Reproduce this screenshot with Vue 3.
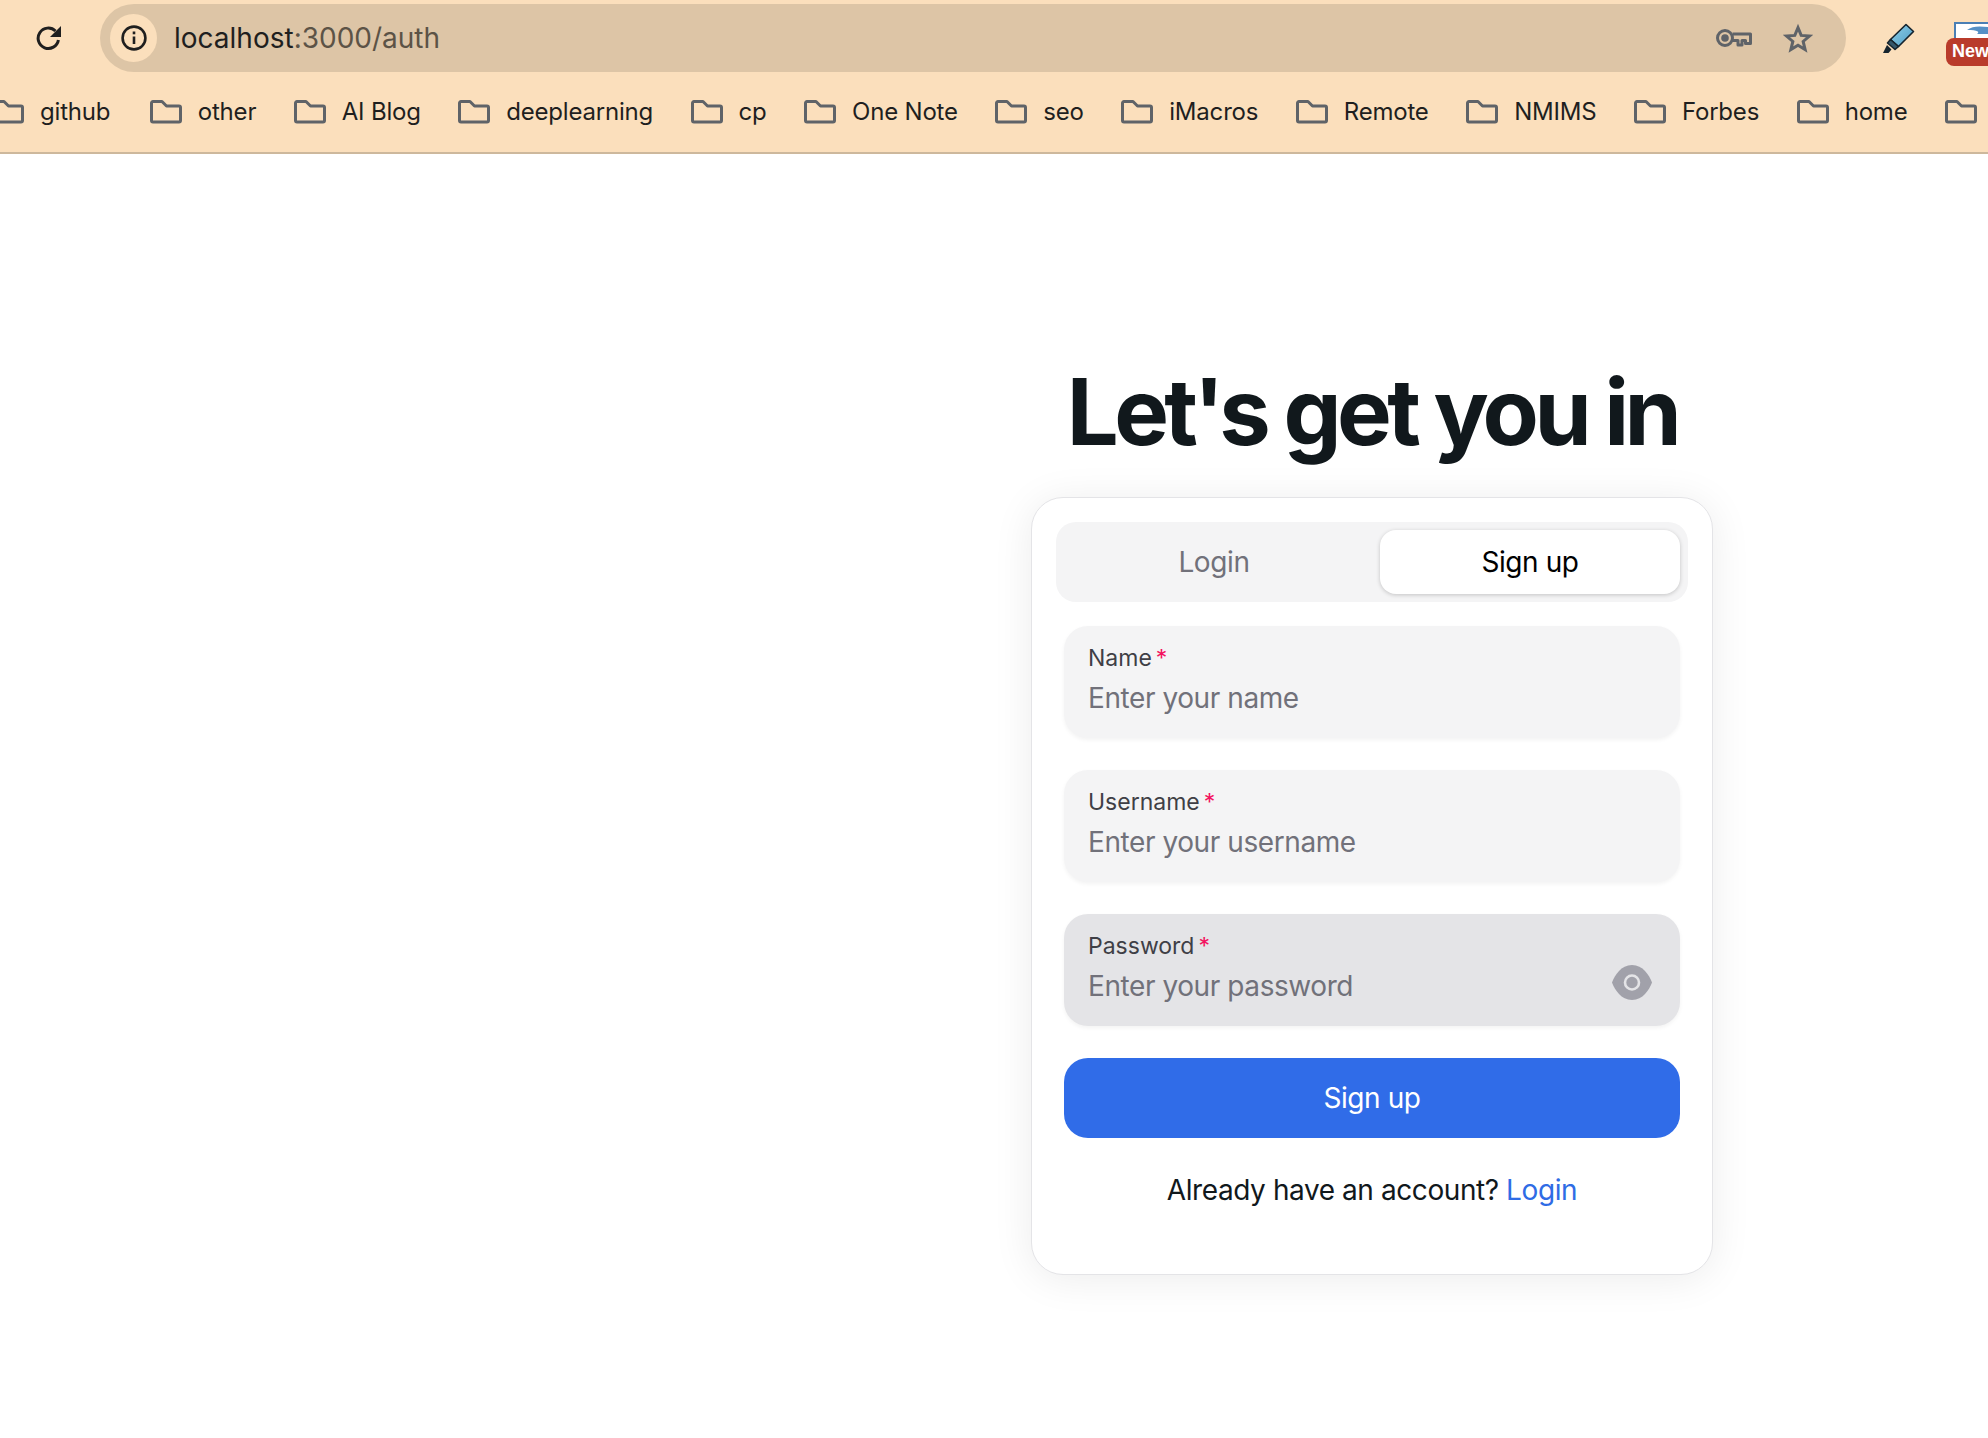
<script setup>
const bookmarks = ["github", "other", "AI Blog", "deeplearning", "cp", "One Note", "seo", "iMacros", "Remote", "NMIMS", "Forbes", "home", ""];
const fields = [
  { label: "Name", placeholder: "Enter your name" },
  { label: "Username", placeholder: "Enter your username" },
  { label: "Password", placeholder: "Enter your password", hover: true, eye: true },
];
</script>

<template>
  <div class="page">
    <header class="toolbar">
      <div class="nav-row">
        <svg class="reload" viewBox="0 0 26 26" fill="none" stroke="#1f1f1f" stroke-width="3">
          <path d="M19.5 6A10.2 10.2 0 1 0 22.4 15" />
          <path d="M25 1v11H14z" fill="#1f1f1f" stroke="none" />
        </svg>
        <div class="address">
          <div class="info-chip">
            <svg width="26" height="26" viewBox="0 0 26 26" fill="none" stroke="#1f1f1f" stroke-width="2.6">
              <circle cx="13" cy="13" r="11.4" />
              <path d="M13 11.5v7.5" />
              <path d="M13 6.5v2.8" />
            </svg>
          </div>
          <span class="url">localhost<span class="url-rest">:3000/auth</span></span>
          <svg class="key" width="36" height="18" viewBox="0 0 36 18" fill="none" stroke="#5f6368" stroke-width="3">
            <circle cx="9" cy="9" r="7.5" />
            <circle cx="9" cy="9" r="3.8" fill="#5f6368" stroke="none" />
            <path d="M16.5 5H34.5V14.5H29.5V11.5H26V16H22V11.5H16.5" stroke-linejoin="round" />
          </svg>
          <svg class="star" width="30" height="30" viewBox="0 0 32 32" fill="none" stroke="#5f6368" stroke-width="3.2" stroke-linejoin="miter">
            <path d="M16 5l3.4 8.2 8.9.7-6.8 5.8 2.1 8.7L16 23.8l-7.6 4.6 2.1-8.7-6.8-5.8 8.9-.7z" />
          </svg>
        </div>
        <svg class="marker" width="33" height="31" viewBox="0 0 33 31">
          <defs>
            <linearGradient id="marker-body" x1="0" y1="0" x2="1" y2="1">
              <stop offset="0" stop-color="#8fd0ea" />
              <stop offset="1" stop-color="#4f9cc4" />
            </linearGradient>
          </defs>
          <path d="M24 1.5l7.5 7-15 15-8-7z" fill="url(#marker-body)" stroke="#16242e" stroke-width="1.6" stroke-linejoin="round" />
          <path d="M8.5 16.5l8 7-3.5 3-7.5-6.5z" fill="#33566a" stroke="#16242e" stroke-width="1.6" stroke-linejoin="round" />
          <path d="M5 22l4.500 4.500-3 3.500H1z" fill="#16242e" />
        </svg>
        <div class="extension">
          <svg class="ext-logo" width="34" height="18" viewBox="0 0 34 18">
            <rect x="0" y="0" width="34" height="18" fill="#4a7fb5" />
            <rect x="2" y="2" width="32" height="16" fill="#fff" />
            <path d="M13 8c5-4 12-4 21-3v7H23c3-2 1-4-10-4z" fill="#5590c6" />
          </svg>
          <span class="new-badge">New</span>
        </div>
      </div>
      <div class="bookmarks">
        <div v-for="(item, i) in bookmarks" :key="i" class="bookmark">
          <svg width="32" height="24" viewBox="0 0 32 24" fill="none" stroke="#5f6368" stroke-width="3" stroke-linejoin="round">
            <path d="M1.500 3a1.500 1.500 0 0 1 1.500-1.500h9l4.500 4.500H29a1.500 1.500 0 0 1 1.500 1.500v13A1.500 1.500 0 0 1 29 22H3a1.500 1.500 0 0 1-1.500-1.500z" />
          </svg>
          <span v-if="item" class="bookmark-name">{{ item }}</span>
        </div>
      </div>
    </header>

    <main class="content">
      <h1 class="title">Let's get you in</h1>
      <section class="card">
        <div class="tabs">
          <button class="tab">Login</button>
          <button class="tab active">Sign up</button>
        </div>
        <form class="form" @submit.prevent>
          <div v-for="field in fields" :key="field.label" class="field" :class="{ hover: field.hover }">
            <div class="field-text">
              <label class="label">{{ field.label }}<span class="required">*</span></label>
              <span class="placeholder">{{ field.placeholder }}</span>
            </div>
            <svg v-if="field.eye" class="eye" width="40" height="35" viewBox="0 0 40 35">
              <path d="M20 0C31 0 37 10 40 17.500C37 25 31 35 20 35C9 35 3 25 0 17.500C3 10 9 0 20 0z" fill="#a1a1aa" />
              <circle cx="20" cy="17.500" r="7" fill="none" stroke="#e4e4e7" stroke-width="2.600" />
            </svg>
          </div>
          <button class="submit" type="submit">Sign up</button>
        </form>
        <p class="switch">Already have an account? <a class="link">Login</a></p>
      </section>
    </main>
  </div>
</template>

<style>
html,
body {
  margin: 0;
  background: #fff;
}
</style>

<style scoped>
.page {
  width: 1988px;
  height: 1438px;
  overflow: hidden;
  background: #fff;
  font-family: Inter, "Noto Sans", sans-serif;
}

.toolbar {
  height: 152px;
  background: #fbdfbc;
  border-bottom: 2px solid #cdb89c;
  overflow: hidden;
}

.nav-row {
  height: 76px;
  display: flex;
  align-items: flex-start;
  padding: 4px 0 0 36px;
  box-sizing: border-box;
}

.reload {
  width: 26px;
  height: 26px;
  margin: 21px 38px 0 0;
  flex: none;
}

.address {
  width: 1746px;
  height: 68px;
  flex: none;
  display: flex;
  align-items: center;
  padding: 0 33px 0 10px;
  box-sizing: border-box;
  border-radius: 34px;
  background: #ddc5a6;
}

.info-chip {
  width: 47px;
  height: 48px;
  display: flex;
  align-items: center;
  justify-content: center;
  border-radius: 50%;
  background: #fbdfbc;
}

.url {
  margin-left: 17px;
  font-size: 28px;
  color: #1f1f1f;
}

.url-rest {
  color: #5c5346;
}

.key {
  margin-left: auto;
}

.star {
  margin-left: 31px;
}

.marker {
  margin: 19px 0 0 36px;
  flex: none;
}

.extension {
  width: 42px;
  margin: 18px 0 0 31px;
  flex: none;
  display: flex;
  flex-direction: column;
  align-items: flex-end;
}

.ext-logo {
  height: 18px;
  margin-bottom: -2px;
}

.new-badge {
  width: 50px;
  height: 28px;
  flex: none;
  padding-left: 6px;
  box-sizing: border-box;
  border-radius: 8px 0 0 8px;
  background: #b93b2b;
  color: #fff;
  font-family: "Liberation Sans", Arial, sans-serif;
  font-size: 18px;
  font-weight: 700;
  line-height: 27px;
  align-self: flex-start;
  white-space: nowrap;
  overflow: hidden;
}

.bookmarks {
  display: flex;
  align-items: center;
  gap: 37.5px;
  height: 72px;
  margin-left: -8px;
  white-space: nowrap;
}

.bookmark {
  display: flex;
  align-items: center;
  gap: 16px;
  flex: none;
  font-size: 24px;
  letter-spacing: -0.2px;
  color: #1f1f1f;
}

.bookmark:first-child {
  margin-right: 2px;
}

.bookmark-name {
  margin-top: -2px;
}

.content {
  display: flex;
  flex-direction: column;
  align-items: center;
  padding: 193px 0 0 756px;
}

.title {
  margin: 0;
  height: 150px;
  font-size: 92px;
  line-height: 130px;
  font-weight: 700;
  letter-spacing: -4.6px;
  color: #11181c;
}

.card {
  width: 682px;
  height: 778px;
  box-sizing: border-box;
  padding: 24px 24px 0;
  border: 1px solid #e4e4e7;
  border-radius: 32px;
  background: #fff;
  box-shadow: 0 4px 40px rgba(0, 0, 0, 0.08);
}

.tabs {
  display: flex;
  height: 80px;
  padding: 8px;
  box-sizing: border-box;
  gap: 16px;
  border-radius: 20px;
  background: #f4f4f5;
}

.tab {
  flex: 1;
  border: 0;
  border-radius: 16px;
  background: transparent;
  color: #71717a;
  font: 400 28px Inter, sans-serif;
  letter-spacing: -0.4px;
}

.tab.active {
  background: #fff;
  color: #000;
  box-shadow: 0 1px 4px rgba(0, 0, 0, 0.2);
}

.form {
  display: flex;
  flex-direction: column;
  gap: 32px;
  margin: 24px 8px 0;
}

.field {
  height: 112px;
  display: flex;
  align-items: center;
  justify-content: space-between;
  padding: 0 28px 0 24px;
  box-sizing: border-box;
  border-radius: 24px;
  background: #f4f4f5;
  box-shadow: 0 2px 4px rgba(0, 0, 0, 0.05);
}

.field.hover {
  background: #e4e4e7;
}

.field-text {
  display: flex;
  flex-direction: column;
  gap: 6px;
  padding-bottom: 6px;
}

.label {
  font-size: 23px;
  line-height: 32px;
  color: #3f3f46;
}

.required {
  margin-left: 4px;
  color: #f31260;
}

.placeholder {
  font-size: 28px;
  line-height: 36px;
  letter-spacing: -0.42px;
  color: #71717a;
}

.eye {
  margin-top: 24px;
}

.submit {
  height: 80px;
  border: 0;
  border-radius: 24px;
  background: #306ce8;
  color: #fff;
  font: 400 28px Inter, sans-serif;
  letter-spacing: -0.4px;
}

.switch {
  margin: 34px 0 0;
  text-align: center;
  font-size: 28px;
  line-height: 36px;
  letter-spacing: -0.42px;
  color: #11181c;
}

.link {
  color: #2f6ce5;
}
</style>
